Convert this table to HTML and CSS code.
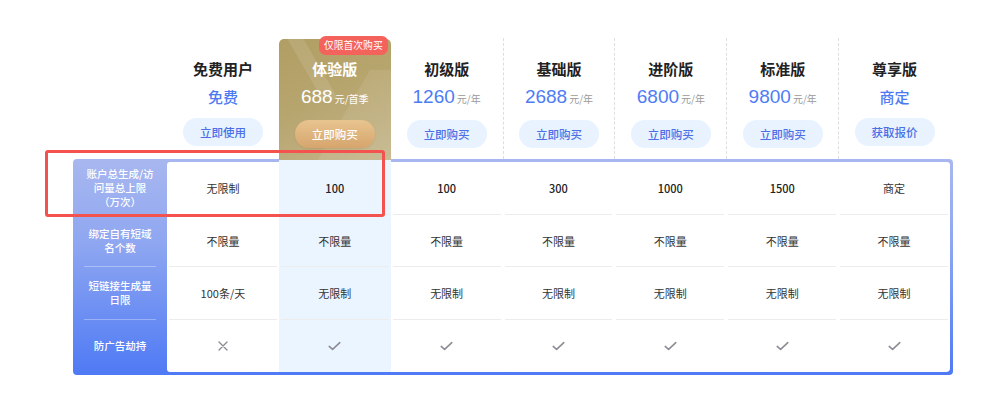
FILE: index.html
```html
<!DOCTYPE html>
<html lang="zh-CN">
<head>
<meta charset="utf-8">
<title>套餐对比</title>
<link rel="stylesheet" href="styles.css">
</head>
<body>
<div class="page">
  <div class="plans">
    <div class="head">
      <div class="head-spacer"></div>
      <div class="plan">
        <div class="plan-name">免费用户</div>
        <div class="plan-text">免费</div>
        <div class="btn">立即使用</div>
      </div>
      <div class="plan plan-gold">
        <span class="deco deco-a"></span>
        <span class="deco deco-b"></span>
        <span class="badge">仅限首次购买</span>
        <div class="plan-name">体验版</div>
        <div class="price">688<span class="unit">元/首季</span></div>
        <div class="btn btn-gold">立即购买</div>
      </div>
      <div class="plan">
        <div class="plan-name">初级版</div>
        <div class="price">1260<span class="unit">元/年</span></div>
        <div class="btn">立即购买</div>
      </div>
      <div class="plan plan-sep">
        <div class="plan-name">基础版</div>
        <div class="price">2688<span class="unit">元/年</span></div>
        <div class="btn">立即购买</div>
      </div>
      <div class="plan plan-sep">
        <div class="plan-name">进阶版</div>
        <div class="price">6800<span class="unit">元/年</span></div>
        <div class="btn">立即购买</div>
      </div>
      <div class="plan plan-sep">
        <div class="plan-name">标准版</div>
        <div class="price">9800<span class="unit">元/年</span></div>
        <div class="btn">立即购买</div>
      </div>
      <div class="plan plan-sep">
        <div class="plan-name">尊享版</div>
        <div class="plan-text">商定</div>
        <div class="btn">获取报价</div>
      </div>
    </div>

    <div class="table">
      <div class="labels">
        <div class="label">账户总生成/访<br>问量总上限<br>（万次）</div>
        <div class="label">绑定自有短域<br>名个数</div>
        <div class="label">短链接生成量<br>日限</div>
        <div class="label label-last">防广告劫持</div>
      </div>
      <div class="cells">
        <div class="cell">无限制</div>
        <div class="cell cell-hl cell-top cell-num">100</div>
        <div class="cell cell-num">100</div>
        <div class="cell cell-num">300</div>
        <div class="cell cell-num">1000</div>
        <div class="cell cell-num">1500</div>
        <div class="cell">商定</div>

        <div class="cell">不限量</div>
        <div class="cell cell-hl">不限量</div>
        <div class="cell">不限量</div>
        <div class="cell">不限量</div>
        <div class="cell">不限量</div>
        <div class="cell">不限量</div>
        <div class="cell">不限量</div>

        <div class="cell">100条/天</div>
        <div class="cell cell-hl">无限制</div>
        <div class="cell">无限制</div>
        <div class="cell">无限制</div>
        <div class="cell">无限制</div>
        <div class="cell">无限制</div>
        <div class="cell">无限制</div>

        <div class="cell cell-last"><svg class="icon" width="10" height="10" viewBox="0 0 10 10"><path d="M1 1 L9 9 M9 1 L1 9" fill="none" stroke="#8a8a92" stroke-width="1.3" stroke-linecap="round"/></svg></div>
        <div class="cell cell-hl cell-last"><svg class="icon" width="13" height="10" viewBox="0 0 13 10"><path d="M1.2 5.4 L4.6 8.4 L11.8 1.6" fill="none" stroke="#8a8a92" stroke-width="1.5" stroke-linecap="round" stroke-linejoin="round"/></svg></div>
        <div class="cell cell-last"><svg class="icon" width="13" height="10" viewBox="0 0 13 10"><path d="M1.2 5.4 L4.6 8.4 L11.8 1.6" fill="none" stroke="#8a8a92" stroke-width="1.5" stroke-linecap="round" stroke-linejoin="round"/></svg></div>
        <div class="cell cell-last"><svg class="icon" width="13" height="10" viewBox="0 0 13 10"><path d="M1.2 5.4 L4.6 8.4 L11.8 1.6" fill="none" stroke="#8a8a92" stroke-width="1.5" stroke-linecap="round" stroke-linejoin="round"/></svg></div>
        <div class="cell cell-last"><svg class="icon" width="13" height="10" viewBox="0 0 13 10"><path d="M1.2 5.4 L4.6 8.4 L11.8 1.6" fill="none" stroke="#8a8a92" stroke-width="1.5" stroke-linecap="round" stroke-linejoin="round"/></svg></div>
        <div class="cell cell-last"><svg class="icon" width="13" height="10" viewBox="0 0 13 10"><path d="M1.2 5.4 L4.6 8.4 L11.8 1.6" fill="none" stroke="#8a8a92" stroke-width="1.5" stroke-linecap="round" stroke-linejoin="round"/></svg></div>
        <div class="cell cell-last"><svg class="icon" width="13" height="10" viewBox="0 0 13 10"><path d="M1.2 5.4 L4.6 8.4 L11.8 1.6" fill="none" stroke="#8a8a92" stroke-width="1.5" stroke-linecap="round" stroke-linejoin="round"/></svg></div>
      </div>
    </div>
  </div>
  <div class="annot"></div>
</div>
</body>
</html>
```

FILE: styles.css
```css
* { box-sizing: border-box; }

html, body {
  margin: 0;
  padding: 0;
  background: #fff;
}

body {
  font-family: "Noto Sans CJK SC", "Noto Sans", sans-serif;
  color: #333;
}

.page {
  position: relative;
  padding: 38px 0 0 73px;
  height: 398px;
}

.plans {
  width: 880px;
}

/* ---------- header ---------- */
.head {
  display: grid;
  grid-template-columns: 94px repeat(7, 1fr) 3px;
  height: 121px;
}

.plan {
  display: flex;
  flex-direction: column;
  align-items: center;
  padding-top: 20px;
}

.plan-sep {
  border-left: 1px dashed #dedede;
}

.plan-name {
  font-size: 15px;
  font-weight: 600;
  line-height: 22px;
  color: #222;
}

.plan-text {
  margin-top: 4px;
  font-size: 15px;
  font-weight: 500;
  line-height: 26px;
  color: #4d7af2;
}

.price {
  margin-top: 4px;
  font-family: "Liberation Sans", "Noto Sans CJK SC", sans-serif;
  font-size: 19px;
  line-height: 26px;
  color: #4e7cf5;
  white-space: nowrap;
}

.unit {
  margin-left: 2px;
  font-family: "Noto Sans CJK SC", sans-serif;
  font-size: 10px;
  color: #9a9a9a;
}

.btn {
  margin-top: 8px;
  width: 80px;
  height: 28px;
  border-radius: 14px;
  background: #e8f3ff;
  color: #4b6fe6;
  font-size: 11.5px;
  font-weight: 500;
  line-height: 28px;
  text-align: center;
}

/* gold trial card */
.plan-gold {
  position: relative;
  z-index: 2;
  margin: 1px 0 -1px;
  padding-top: 19px;
  border-radius: 5px 5px 0 0;
  background: linear-gradient(155deg, #b09e64 0%, #b7a56e 45%, #c4b68c 100%);
}

.deco {
  position: absolute;
  pointer-events: none;
}

.deco-a {
  left: 0;
  top: 0;
  width: 60px;
  height: 60px;
  border-top-left-radius: 5px;
  background: linear-gradient(60deg, rgba(255,255,255,0) 45%, rgba(255,255,255,0.10) 46%, rgba(255,255,255,0.10) 62%, rgba(255,255,255,0) 63%);
}

.deco-b {
  right: 0;
  bottom: 0;
  width: 112px;
  height: 90px;
  background: linear-gradient(120deg, rgba(255,255,255,0) 55%, rgba(255,255,255,0.08) 56%);
}

.plan-gold .plan-name,
.plan-gold .price,
.plan-gold .unit {
  color: #fff;
  position: relative;
}

.badge {
  position: absolute;
  top: -3px;
  right: 3px;
  z-index: 3;
  height: 19px;
  padding: 0 5px;
  border-radius: 7px 6px 7px 7px;
  background: #f4625c;
  color: #fff;
  font-size: 9.8px;
  line-height: 19px;
  white-space: nowrap;
}

.btn-gold {
  position: relative;
  background: linear-gradient(180deg, #e8c48f 0%, #d6a56d 100%);
  color: #fff;
  box-shadow: 0 1px 2px rgba(150, 110, 50, 0.2);
}

/* ---------- table ---------- */
.table {
  display: grid;
  grid-template-columns: 94px 1fr;
  height: 216px;
  padding: 3px 3px 3px 0;
  border-radius: 4px;
  background: linear-gradient(180deg, #a8b7ef 0%, #8ea6f1 40%, #4f7af5 100%);
}

.labels {
  display: grid;
  grid-template-rows: repeat(4, 1fr);
}

.label {
  position: relative;
  display: flex;
  align-items: center;
  justify-content: center;
  text-align: center;
  color: #fff;
  font-size: 10.5px;
  font-weight: 500;
  line-height: 14px;
}

.label::after {
  content: "";
  position: absolute;
  left: 11px;
  right: 11px;
  bottom: 0;
  height: 1px;
  background: rgba(255, 255, 255, 0.32);
}

.label-last::after {
  display: none;
}

.cells {
  display: grid;
  grid-template-columns: repeat(7, 1fr);
  grid-template-rows: repeat(4, 1fr);
  background: #fff;
  border-radius: 3px 3px 4px 3px;
}

.cell {
  position: relative;
  display: flex;
  align-items: center;
  justify-content: center;
  font-size: 11px;
  color: #333;
}

.cell-num {
  font-weight: 500;
  color: #222;
}

.cell::after {
  content: "";
  position: absolute;
  left: 2px;
  right: 2px;
  bottom: 0;
  height: 1px;
  background: #ececec;
}

.cell-last::after {
  display: none;
}

.cell-hl {
  background: #ebf5ff;
}

.cell-top::before {
  content: "";
  position: absolute;
  left: 0;
  right: 0;
  top: -3px;
  height: 3px;
  background: #ebf5ff;
}

.icon {
  display: block;
}

/* red annotation frame */
.annot {
  position: absolute;
  left: 45px;
  top: 150px;
  width: 340px;
  height: 67px;
  z-index: 5;
  border: 3px solid #f4524f;
  border-radius: 3px;
}
```
